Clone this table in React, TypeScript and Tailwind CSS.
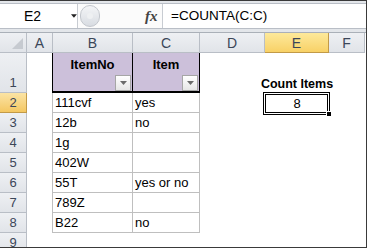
import React from 'react';

const cols = ['A', 'B', 'C', 'D', 'E', 'F'];

const rows: { n: number; b?: string; c?: string }[] = [
	{ n: 2, b: '111cvf', c: 'yes' },
	{ n: 3, b: '12b', c: 'no' },
	{ n: 4, b: '1g' },
	{ n: 5, b: '402W' },
	{ n: 6, b: '55T', c: 'yes or no' },
	{ n: 7, b: '789Z' },
	{ n: 8, b: 'B22', c: 'no' },
];

function FilterButton() {
	return (
		<div className="mr-px flex h-[16px] w-[16px] items-center justify-center self-end border border-[#a6a6a6] bg-gradient-to-b from-white to-[#e6e6e6]">
			<svg width="7" height="4" viewBox="0 0 7 4">
				<path d="M0 0h7L3.5 4z" fill="#6b6b6b" />
			</svg>
		</div>
	);
}

function RowHead({ n, active }: { n: number; active?: boolean }) {
	return (
		<div
			className={
				active
					? 'flex items-end justify-center border-r border-b border-[#c29a48] bg-gradient-to-b from-[#fbe4a4] to-[#f4c761] pb-[3px] text-[#3b4658]'
					: 'flex items-end justify-center border-r border-b border-[#b9bec6] bg-gradient-to-b from-[#eef0f3] to-[#e1e4e9] pb-[3px] text-[#3b4658]'
			}
		>
			{n}
		</div>
	);
}

export default function App() {
	return (
		<div className="h-[248px] w-[367px] overflow-hidden border-t border-r border-b border-[#3a3a3a] bg-white font-['Liberation_Sans',Arial,sans-serif] text-[13px] leading-none">
			{/* Formula bar */}
			<div className="h-[31px] bg-[#e3e6ea] pt-[2px]">
				<div className="flex h-[26px] border-y border-[#b9bec6] bg-white">
					<div className="flex w-[78px] items-center border-r border-[#c8ccd2]">
						<span className="ml-[24px] text-[14px] text-black">E2</span>
						<svg className="ml-[30px]" width="7" height="4" viewBox="0 0 7 4">
							<path d="M0 0h7L3.5 4z" fill="#222" />
						</svg>
					</div>
					<div className="flex w-[85px] items-center border-r border-[#c8ccd2] bg-[#fbfbfb]">
						<div className="ml-[2px] flex h-[22px] w-[20px] items-center justify-center rounded-full border border-[#c3c7cd] bg-gradient-to-b from-[#f4f5f7] to-[#d8dce2]">
							<div className="h-[6px] w-[6px] rounded-full bg-[#eef0f2]" />
						</div>
						<span className="ml-[45px] font-['Liberation_Serif',serif] text-[15px] font-bold italic text-[#444]">fx</span>
					</div>
					<div className="flex items-center pl-[8px] text-[13.5px] text-black">=COUNTA(C:C)</div>
				</div>
			</div>

			{/* Sheet */}
			<div className="grid grid-cols-[27px_26px_80px_67px_65px_64px_36px] grid-rows-[20px_40px_repeat(8,20px)] border-t border-[#aab0b8]">
				{/* Column headers */}
				<div className="flex items-end justify-end border-r border-b border-[#b9bec6] bg-gradient-to-b from-[#eef0f3] to-[#e1e4e9] p-[3px]">
					<svg width="11" height="11" viewBox="0 0 11 11">
						<path d="M11 0v11H0z" fill="#c6cad0" />
					</svg>
				</div>
				{cols.map((c) =>
					c === 'E' ? (
						<div
							key={c}
							className="flex items-center justify-center border-r border-b border-[#c29a48] bg-gradient-to-b from-[#fde99a] to-[#f8d166] text-[14px] text-[#3b4658]"
						>
							{c}
						</div>
					) : (
						<div
							key={c}
							className="flex items-center justify-center border-r border-b border-[#b9bec6] bg-gradient-to-b from-[#eef0f3] to-[#e1e4e9] text-[14px] text-[#3b4658]"
						>
							{c}
						</div>
					)
				)}

				{/* Row 1 */}
				<RowHead n={1} />
				<div className="border-r border-black" />
				<div className="flex flex-col items-center border-r border-b-2 border-black bg-[#ccc0da] pt-[5px]">
					<span className="font-bold text-black">ItemNo</span>
					<div className="flex-1" />
					<FilterButton />
				</div>
				<div className="flex flex-col items-center border-r border-b-2 border-black bg-[#ccc0da] pt-[5px]">
					<span className="font-bold text-black">Item</span>
					<div className="flex-1" />
					<FilterButton />
				</div>
				<div />
				<div className="flex items-end justify-center pb-[3px] font-bold whitespace-nowrap text-black">
					<span className="text-[12.5px]">Count Items</span>
				</div>
				<div />

				{/* Data rows */}
				{rows.map((r) => (
					<React.Fragment key={r.n}>
						<RowHead n={r.n} active={r.n === 2} />
						<div className="border-r border-[#bfbfbf]" />
						<div className="flex items-center border-r border-b border-[#bfbfbf] pl-[2px] text-black">{r.b}</div>
						<div className="flex items-center border-r border-b border-[#bfbfbf] pl-[2px] text-black">{r.c}</div>
						<div />
						{r.n === 2 ? (
							<div className="relative flex items-center justify-center text-black">
								<div className="absolute -top-px -right-px -bottom-[2px] -left-[2px] border border-black p-px">
									<div className="h-full w-full border border-black" />
								</div>
								<div className="absolute -right-[3px] -bottom-[4px] h-[6px] w-[6px] border border-white bg-black" />
								<span className="relative">8</span>
							</div>
						) : (
							<div />
						)}
						<div />
					</React.Fragment>
				))}

				{/* Row 9 */}
				<RowHead n={9} />
				<div />
				<div />
				<div />
				<div />
				<div />
				<div />
			</div>
		</div>
	);
}
